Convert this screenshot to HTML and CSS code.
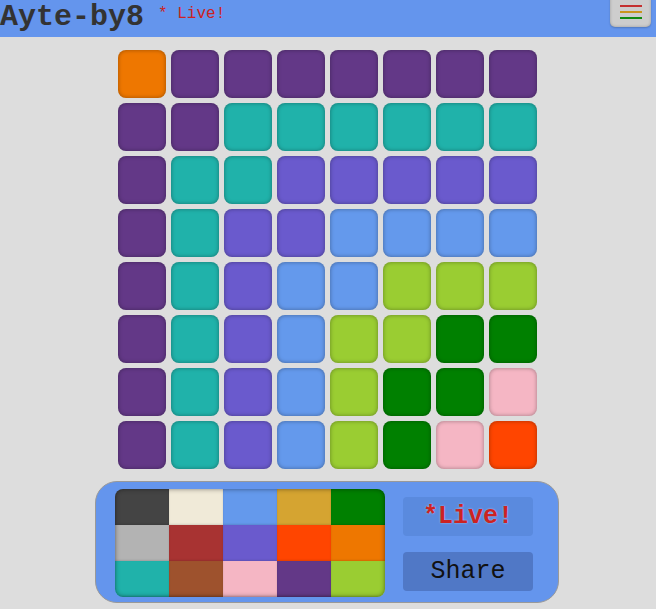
FILE: index.html
```html
<!DOCTYPE html>
<html>
<head>
<meta charset="utf-8">
<link rel="stylesheet" href="styles.css">
</head>
<body>
<header class="topbar">
  <h1 class="title">Ayte-by8</h1>
  <span class="live-tag">* Live!</span>
  <button class="menu-btn" aria-label="menu">
    <span class="line red"></span>
    <span class="line gold"></span>
    <span class="line green"></span>
  </button>
</header>
<main class="board">
  <div class="tile c-orange"></div><div class="tile c-purple"></div><div class="tile c-purple"></div><div class="tile c-purple"></div><div class="tile c-purple"></div><div class="tile c-purple"></div><div class="tile c-purple"></div><div class="tile c-purple"></div>
  <div class="tile c-purple"></div><div class="tile c-purple"></div><div class="tile c-teal"></div><div class="tile c-teal"></div><div class="tile c-teal"></div><div class="tile c-teal"></div><div class="tile c-teal"></div><div class="tile c-teal"></div>
  <div class="tile c-purple"></div><div class="tile c-teal"></div><div class="tile c-teal"></div><div class="tile c-slate"></div><div class="tile c-slate"></div><div class="tile c-slate"></div><div class="tile c-slate"></div><div class="tile c-slate"></div>
  <div class="tile c-purple"></div><div class="tile c-teal"></div><div class="tile c-slate"></div><div class="tile c-slate"></div><div class="tile c-blue"></div><div class="tile c-blue"></div><div class="tile c-blue"></div><div class="tile c-blue"></div>
  <div class="tile c-purple"></div><div class="tile c-teal"></div><div class="tile c-slate"></div><div class="tile c-blue"></div><div class="tile c-blue"></div><div class="tile c-lime"></div><div class="tile c-lime"></div><div class="tile c-lime"></div>
  <div class="tile c-purple"></div><div class="tile c-teal"></div><div class="tile c-slate"></div><div class="tile c-blue"></div><div class="tile c-lime"></div><div class="tile c-lime"></div><div class="tile c-green"></div><div class="tile c-green"></div>
  <div class="tile c-purple"></div><div class="tile c-teal"></div><div class="tile c-slate"></div><div class="tile c-blue"></div><div class="tile c-lime"></div><div class="tile c-green"></div><div class="tile c-green"></div><div class="tile c-pink"></div>
  <div class="tile c-purple"></div><div class="tile c-teal"></div><div class="tile c-slate"></div><div class="tile c-blue"></div><div class="tile c-lime"></div><div class="tile c-green"></div><div class="tile c-pink"></div><div class="tile c-red"></div>
</main>
<section class="panel">
  <div class="palette">
    <div class="swatch c-dark"></div><div class="swatch c-cream"></div><div class="swatch c-blue"></div><div class="swatch c-gold"></div><div class="swatch c-green"></div>
    <div class="swatch c-silver"></div><div class="swatch c-brown"></div><div class="swatch c-slate"></div><div class="swatch c-red"></div><div class="swatch c-orange"></div>
    <div class="swatch c-teal"></div><div class="swatch c-sienna"></div><div class="swatch c-pink"></div><div class="swatch c-purple"></div><div class="swatch c-lime"></div>
  </div>
  <div class="actions">
    <button class="btn btn-live">*Live!</button>
    <button class="btn btn-share">Share</button>
  </div>
</section>
</body>
</html>
```

FILE: styles.css
```css
* { box-sizing: border-box; }
html, body { margin: 0; padding: 0; }
body {
  background: #dddddd;
  font-family: "Liberation Mono", "Courier New", monospace;
  width: 656px;
  height: 609px;
  overflow: hidden;
}
.topbar {
  position: relative;
  height: 37px;
  background: #6495ed;
  display: flex;
  align-items: flex-start;
  padding: 0;
}
.title {
  margin: 0;
  font-size: 30px;
  line-height: 34px;
  font-weight: bold;
  color: #333333;
}
.live-tag {
  margin: 5px 0 0 14px;
  font-size: 16px;
  line-height: 18px;
  color: #cc2222;
}
.menu-btn {
  position: absolute;
  right: 5px;
  top: -4px;
  width: 41px;
  height: 31px;
  border: none;
  border-radius: 0 0 5px 5px;
  background: #cdcdcd;
  box-shadow: inset 0 0 3px rgba(0,0,0,0.25), 0 1px 2px rgba(0,0,0,0.2);
  display: flex;
  flex-direction: column;
  align-items: center;
  justify-content: flex-start;
  gap: 4px;
  padding: 9px 0 0 0;
}
.line { display: block; width: 22px; height: 2px; }
.line.red { background: #c43030; }
.line.gold { background: #c9951c; }
.line.green { background: #108a10; }

.board {
  margin: 13px 0 0 118px;
  width: 419px;
  display: grid;
  grid-template-columns: repeat(8, 48px);
  grid-auto-rows: 48px;
  gap: 5px;
}
.tile {
  border-radius: 8px;
  box-shadow: inset 0 0 4px rgba(0,0,0,0.35);
}
.c-orange { background: #ee7700; }
.c-purple { background: #633887; }
.c-teal { background: #20b2aa; }
.c-slate { background: #6a5acd; }
.c-blue { background: #6499ec; }
.c-lime { background: #9acd32; }
.c-green { background: #008000; }
.c-pink { background: #f5b6c4; }
.c-red { background: #ff4500; }
.c-dark { background: #444444; }
.c-cream { background: #f0ead8; }
.c-gold { background: #d5a431; }
.c-silver { background: #b3b3b3; }
.c-brown { background: #a83332; }
.c-sienna { background: #9e522d; }

.panel {
  margin: 12px 0 0 95px;
  width: 464px;
  height: 122px;
  background: #6495ed;
  border: 1px solid #999999;
  border-radius: 22px;
  display: flex;
  align-items: flex-start;
  padding: 7px 0 0 19px;
}
.palette {
  position: relative;
  width: 270px;
  height: 108px;
  border-radius: 8px;
  overflow: hidden;
  display: grid;
  grid-template-columns: repeat(5, 54px);
  grid-auto-rows: 36px;
}
.palette::after {
  content: "";
  position: absolute;
  inset: 0;
  border-radius: 8px;
  box-shadow: inset 0 0 5px rgba(0,0,0,0.45);
  pointer-events: none;
}
.swatch { box-shadow: inset 0 -1px 2px rgba(0,0,0,0.12); }
.actions {
  margin-left: 18px;
  padding-top: 8px;
  display: flex;
  flex-direction: column;
  gap: 16px;
}
.btn {
  width: 130px;
  height: 39px;
  border: none;
  border-radius: 4px;
  font-family: "Liberation Mono", "Courier New", monospace;
  font-size: 25px;
  padding: 0;
}
.btn-live {
  background: #5a8ade;
  color: #cc2222;
  font-weight: bold;
  text-shadow: 0 0 2px #b8c8f0;
}
.btn-share {
  background: #5078c6;
  color: #111111;
  font-weight: normal;
}
```
